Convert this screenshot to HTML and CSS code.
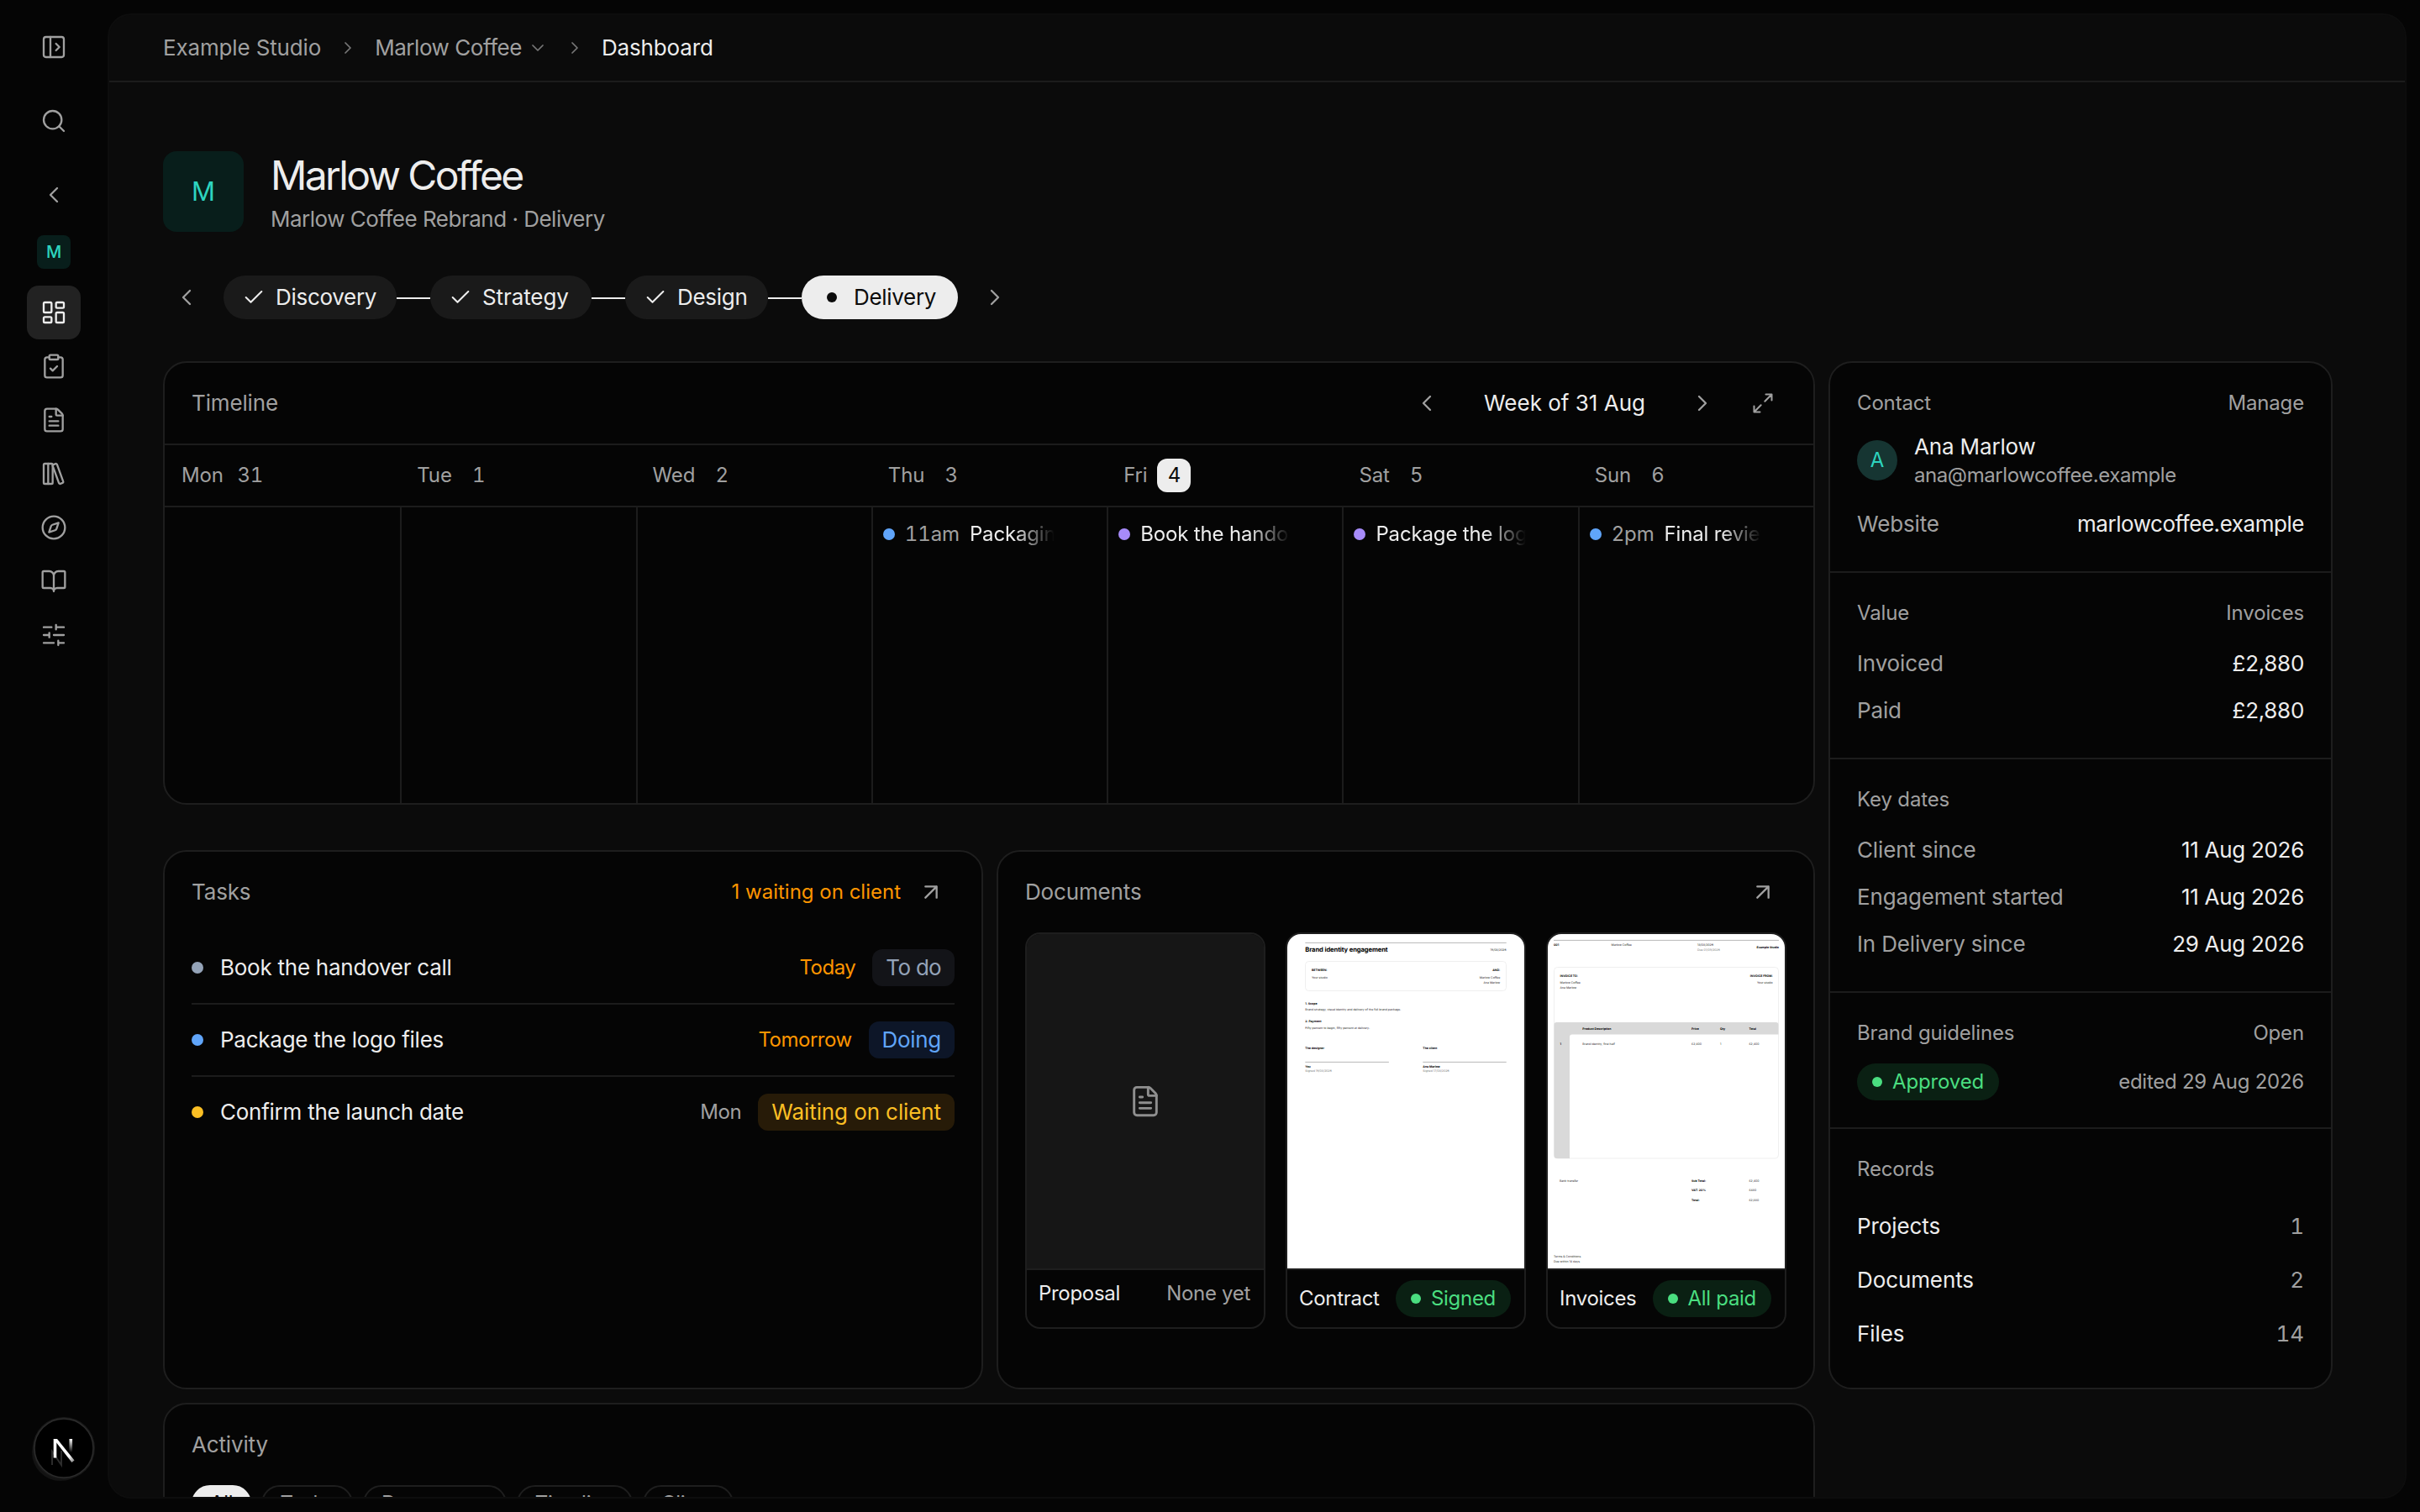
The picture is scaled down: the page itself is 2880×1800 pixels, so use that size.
FILE: index.html
```
<!DOCTYPE html>
<html lang="en">
<head>
    <meta charset="UTF-8">
    <meta name="viewport" content="width=device-width, initial-scale=1.0">
    <title>Marlow Coffee - Dashboard</title>
    <link rel="stylesheet" href="styles.css">
</head>
<body>
    <svg class="sprite">
        <symbol id="i-panel" viewBox="0 0 24 24"><rect x="3" y="3" width="18" height="18" rx="2"/><path d="M9 3v18M14 9l3 3-3 3"/></symbol>
        <symbol id="i-search" viewBox="0 0 24 24"><circle cx="11" cy="11" r="8"/><path d="m21 21-4.34-4.34"/></symbol>
        <symbol id="i-left" viewBox="0 0 24 24"><path d="m15 18-6-6 6-6"/></symbol>
        <symbol id="i-right" viewBox="0 0 24 24"><path d="m9 18 6-6-6-6"/></symbol>
        <symbol id="i-down" viewBox="0 0 24 24"><path d="m6 9 6 6 6-6"/></symbol>
        <symbol id="i-check" viewBox="0 0 24 24"><path d="M20 6 9 17l-5-5"/></symbol>
        <symbol id="i-grid" viewBox="0 0 24 24"><rect x="3" y="3" width="7" height="9" rx="1"/><rect x="14" y="3" width="7" height="5" rx="1"/><rect x="14" y="12" width="7" height="9" rx="1"/><rect x="3" y="16" width="7" height="5" rx="1"/></symbol>
        <symbol id="i-clipboard" viewBox="0 0 24 24"><rect x="8" y="2" width="8" height="4" rx="1"/><path d="M16 4h2a2 2 0 0 1 2 2v14a2 2 0 0 1-2 2H6a2 2 0 0 1-2-2V6a2 2 0 0 1 2-2h2"/><path d="m9 14 2 2 4-4"/></symbol>
        <symbol id="i-file" viewBox="0 0 24 24"><path d="M6 22a2 2 0 0 1-2-2V4a2 2 0 0 1 2-2h8a2.4 2.4 0 0 1 1.704.706l3.588 3.588A2.4 2.4 0 0 1 20 8v12a2 2 0 0 1-2 2z"/><path d="M14 2v5a1 1 0 0 0 1 1h5M10 9H8M16 13H8M16 17H8"/></symbol>
        <symbol id="i-library" viewBox="0 0 24 24"><rect x="3" y="3" width="8" height="18" rx="1"/><path d="M7 3v18"/><path d="M20.4 18.9c.2.5-.1 1.1-.6 1.3l-1.9.7c-.5.2-1.1-.1-1.3-.6L11.1 5.1c-.2-.5.1-1.1.6-1.3l1.9-.7c.5-.2 1.1.1 1.3.6Z"/></symbol>
        <symbol id="i-compass" viewBox="0 0 24 24"><circle cx="12" cy="12" r="10"/><path d="m16.24 7.76-1.804 5.411a2 2 0 0 1-1.265 1.265L7.76 16.24l1.804-5.411a2 2 0 0 1 1.265-1.265z"/></symbol>
        <symbol id="i-book" viewBox="0 0 24 24"><path d="M12 7v14M3 18a1 1 0 0 1-1-1V4a1 1 0 0 1 1-1h5a4 4 0 0 1 4 4 4 4 0 0 1 4-4h5a1 1 0 0 1 1 1v13a1 1 0 0 1-1 1h-6a3 3 0 0 0-3 3 3 3 0 0 0-3-3z"/></symbol>
        <symbol id="i-sliders" viewBox="0 0 24 24"><path d="M10 5H3M12 19H3M14 3v4M16 17v4M21 12h-9M21 19h-5M21 5h-7M8 10v4M8 12H3"/></symbol>
        <symbol id="i-expand" viewBox="0 0 24 24"><path d="M15 3h6v6M21 3l-7 7M3 21l7-7M9 21H3v-6"/></symbol>
        <symbol id="i-arrow" viewBox="0 0 24 24"><path d="M7 7h10v10M7 17 17 7"/></symbol>
    </svg>

    <div class="app">
        <nav class="sidebar">
            <a class="side-btn"><svg class="icon"><use href="#i-panel"/></svg></a>
            <a class="side-btn"><svg class="icon"><use href="#i-search"/></svg></a>
            <a class="side-btn"><svg class="icon"><use href="#i-left"/></svg></a>
            <div class="side-client">M</div>
            <div class="side-nav">
                <a class="side-btn active"><svg class="icon"><use href="#i-grid"/></svg></a>
                <a class="side-btn"><svg class="icon"><use href="#i-clipboard"/></svg></a>
                <a class="side-btn"><svg class="icon"><use href="#i-file"/></svg></a>
                <a class="side-btn"><svg class="icon"><use href="#i-library"/></svg></a>
                <a class="side-btn"><svg class="icon"><use href="#i-compass"/></svg></a>
                <a class="side-btn"><svg class="icon"><use href="#i-book"/></svg></a>
                <a class="side-btn"><svg class="icon"><use href="#i-sliders"/></svg></a>
            </div>
        </nav>

        <main class="panel">
            <header class="topbar">
                <span>Example Studio</span>
                <svg class="icon crumb-sep"><use href="#i-right"/></svg>
                <span class="crumb-menu"><span class="tight">Marlow Coffee</span><svg class="icon"><use href="#i-down"/></svg></span>
                <svg class="icon crumb-sep"><use href="#i-right"/></svg>
                <span class="current">Dashboard</span>
            </header>

            <div class="content">
                <div class="client">
                    <div class="client-logo">M</div>
                    <div class="client-text">
                        <h1>Marlow Coffee</h1>
                        <p>Marlow Coffee Rebrand · Delivery</p>
                    </div>
                </div>

                <div class="stages">
                    <button class="icon-btn"><svg class="icon"><use href="#i-left"/></svg></button>
                    <div class="track">
                        <span class="stage"><svg class="icon"><use href="#i-check"/></svg>Discovery</span>
                        <span class="stage"><svg class="icon"><use href="#i-check"/></svg>Strategy</span>
                        <span class="stage"><svg class="icon"><use href="#i-check"/></svg>Design</span>
                        <span class="stage now"><i class="stage-dot"></i>Delivery</span>
                    </div>
                    <button class="icon-btn"><svg class="icon"><use href="#i-right"/></svg></button>
                </div>

                <div class="board">
                    <div class="board-main">
                        <section class="card timeline">
                            <div class="card-head">
                                <h2>Timeline</h2>
                                <div class="week">
                                    <button class="icon-btn"><svg class="icon"><use href="#i-left"/></svg></button>
                                    <span class="week-label">Week of 31 Aug</span>
                                    <button class="icon-btn"><svg class="icon"><use href="#i-right"/></svg></button>
                                    <button class="icon-btn expand"><svg class="icon"><use href="#i-expand"/></svg></button>
                                </div>
                            </div>
                            <div class="days">
                                <div class="day">Mon <b>31</b></div>
                                <div class="day">Tue <b>1</b></div>
                                <div class="day">Wed <b>2</b></div>
                                <div class="day">Thu <b>3</b></div>
                                <div class="day today">Fri <b>4</b></div>
                                <div class="day">Sat <b>5</b></div>
                                <div class="day">Sun <b>6</b></div>
                            </div>
                            <div class="cells">
                                <div class="cell"></div>
                                <div class="cell"></div>
                                <div class="cell"></div>
                                <div class="cell"><div class="event"><i class="dot blue"></i><time>11am</time><span>Packaging review</span></div></div>
                                <div class="cell"><div class="event"><i class="dot purple"></i><span>Book the handover call</span></div></div>
                                <div class="cell"><div class="event"><i class="dot purple"></i><span>Package the logo files</span></div></div>
                                <div class="cell"><div class="event"><i class="dot blue"></i><time>2pm</time><span>Final review call</span></div></div>
                            </div>
                        </section>

                        <div class="pair">
                            <section class="card tasks">
                                <div class="card-head">
                                    <h2>Tasks</h2>
                                    <div class="head-right">
                                        <span class="warn">1 waiting on client</span>
                                        <button class="icon-btn"><svg class="icon"><use href="#i-arrow"/></svg></button>
                                    </div>
                                </div>
                                <ul class="task-list">
                                    <li><i class="dot slate"></i><span class="task-name">Book the handover call</span><span class="due soon">Today</span><span class="tag todo">To do</span></li>
                                    <li><i class="dot blue"></i><span class="task-name">Package the logo files</span><span class="due soon">Tomorrow</span><span class="tag doing">Doing</span></li>
                                    <li><i class="dot amber"></i><span class="task-name">Confirm the launch date</span><span class="due">Mon</span><span class="tag waiting">Waiting on client</span></li>
                                </ul>
                            </section>

                            <section class="card">
                                <div class="card-head">
                                    <h2>Documents</h2>
                                    <button class="icon-btn"><svg class="icon"><use href="#i-arrow"/></svg></button>
                                </div>
                                <div class="docs">
                                    <div class="doc">
                                        <div class="thumb empty"><svg class="icon"><use href="#i-file"/></svg></div>
                                        <div class="doc-foot"><span>Proposal</span><span class="muted">None yet</span></div>
                                    </div>
                                    <div class="doc">
                                        <div class="thumb">
                                            <svg class="sheet" viewBox="0 0 282 398">
                                                <path class="rule" d="M21.3 10.4h239.4M21.3 152.4h99.6M161.3 152.4h99.4"/>
                                                <rect class="frame" x="21.5" y="32.5" width="239" height="35" rx="4"/>
                                                <text class="title" x="21.3" y="21.2">Brand identity engagement</text>
                                                <text class="end" x="260.7" y="19.9">15/08/2026</text>
                                                <text class="strong" x="29" y="43.9">BETWEEN:</text>
                                                <text x="29" y="52.9">Your studio</text>
                                                <text class="strong end" x="253.2" y="43.9">AND:</text>
                                                <text class="end" x="253.2" y="52.9">Marlow Coffee</text>
                                                <text class="end" x="253.2" y="58.9">Ana Marlow</text>
                                                <text class="strong" x="21.3" y="83.9">1. Scope</text>
                                                <text x="21.3" y="90.9">Brand strategy, visual identity and delivery of the full brand package.</text>
                                                <text class="strong" x="21.3" y="105">2. Payment</text>
                                                <text x="21.3" y="112.9">Fifty percent to begin, fifty percent at delivery.</text>
                                                <text class="strong" x="21.3" y="136.9">The designer</text>
                                                <text class="strong" x="161.3" y="136.9">The client</text>
                                                <text class="strong" x="21.3" y="158.9">You</text>
                                                <text class="strong" x="161.3" y="158.9">Ana Marlow</text>
                                                <text class="pale" x="21.3" y="164">Signed 15/08/2026</text>
                                                <text class="pale" x="161.3" y="164">Signed 17/08/2026</text>
                                            </svg>
                                        </div>
                                        <div class="doc-foot"><span>Contract</span><span class="pill"><i></i>Signed</span></div>
                                    </div>
                                    <div class="doc">
                                        <div class="thumb">
                                            <svg class="sheet" viewBox="0 0 282 398">
                                                <path class="rule" d="M7 7.4h268"/>
                                                <text class="strong" x="7" y="13.9">001</text>
                                                <text x="75.5" y="13.9">Marlow Coffee</text>
                                                <text x="178" y="13.9">18/08/2026</text>
                                                <text class="pale" x="178" y="19.9">Due 01/09/2026</text>
                                                <text class="strong end" x="275" y="17.2">Example Studio</text>
                                                <rect class="frame" x="7.5" y="39.5" width="267" height="227.5" rx="4"/>
                                                <path class="band" d="M10.5 105h261a3 3 0 0 1 3 3v11.5H29a3 3 0 0 0-3 3V267H10.5a3 3 0 0 1-3-3V108a3 3 0 0 1 3-3z"/>
                                                <text class="strong" x="14.5" y="50.9">INVOICE TO:</text>
                                                <text x="14.5" y="58.9">Marlow Coffee</text>
                                                <text x="14.5" y="65">Ana Marlow</text>
                                                <text class="strong end" x="267.7" y="50.9">INVOICE FROM:</text>
                                                <text class="end" x="267.7" y="58.9">Your studio</text>
                                                <text class="strong" x="41.3" y="113.9">Product Description</text>
                                                <text class="strong" x="171" y="113.9">Price</text>
                                                <text class="strong" x="205" y="113.9">Qty</text>
                                                <text class="strong" x="239.4" y="113.9">Total</text>
                                                <text class="strong" x="14.5" y="131.9">1</text>
                                                <text x="41.3" y="131.9">Brand identity, first half</text>
                                                <text x="171" y="131.9">£2,400</text>
                                                <text x="205" y="131.9">1</text>
                                                <text x="239.4" y="131.9">£2,400</text>
                                                <text x="14" y="294.9">Bank transfer</text>
                                                <text class="strong" x="171" y="294.9">Sub Total:</text>
                                                <text x="239.4" y="294.9">£2,400</text>
                                                <text class="strong" x="171" y="306">VAT: 20%</text>
                                                <text x="239.4" y="306">£480</text>
                                                <text class="strong" x="171" y="317.9">Total:</text>
                                                <text x="239.4" y="317.9">£2,880</text>
                                                <text x="7" y="384.9">Terms &amp; Conditions</text>
                                                <text x="7" y="390.9">Due within 14 days</text>
                                            </svg>
                                        </div>
                                        <div class="doc-foot"><span>Invoices</span><span class="pill"><i></i>All paid</span></div>
                                    </div>
                                </div>
                            </section>
                        </div>

                        <section class="card activity">
                            <div class="card-head"><h2>Activity</h2></div>
                            <div class="chips">
                                <span class="chip on">All</span>
                                <span class="chip">Tasks</span>
                                <span class="chip">Documents</span>
                                <span class="chip">Timeline</span>
                                <span class="chip">Client</span>
                            </div>
                        </section>
                    </div>

                    <aside class="card info">
                        <section>
                            <div class="info-head"><h3>Contact</h3><a>Manage</a></div>
                            <div class="person">
                                <div class="person-pic">A</div>
                                <div>
                                    <div class="person-name">Ana Marlow</div>
                                    <div class="person-mail">ana@marlowcoffee.example</div>
                                </div>
                            </div>
                            <div class="row"><span>Website</span><b class="tight">marlowcoffee.example</b></div>
                        </section>
                        <section>
                            <div class="info-head"><h3>Value</h3><a>Invoices</a></div>
                            <div class="row"><span>Invoiced</span><b>£2,880</b></div>
                            <div class="row"><span>Paid</span><b>£2,880</b></div>
                        </section>
                        <section>
                            <div class="info-head"><h3>Key dates</h3></div>
                            <div class="row"><span>Client since</span><b>11 Aug 2026</b></div>
                            <div class="row"><span>Engagement started</span><b>11 Aug 2026</b></div>
                            <div class="row"><span>In Delivery since</span><b>29 Aug 2026</b></div>
                        </section>
                        <section>
                            <div class="info-head"><h3>Brand guidelines</h3><a>Open</a></div>
                            <div class="row guide"><span class="pill"><i></i>Approved</span><small>edited 29 Aug 2026</small></div>
                        </section>
                        <section class="records">
                            <div class="info-head"><h3>Records</h3></div>
                            <div class="row"><b>Projects</b><span>1</span></div>
                            <div class="row"><b>Documents</b><span>2</span></div>
                            <div class="row"><b>Files</b><span>14</span></div>
                        </section>
                    </aside>
                </div>
            </div>
        </main>
    </div>

    <!-- dev tools badge, floats over the page -->
    <div class="dev-badge">
        <svg viewBox="0 0 80 80">
            <defs>
                <linearGradient id="fadeDiag" x1="48" y1="48" x2="60" y2="63" gradientUnits="userSpaceOnUse"><stop offset="0" stop-color="#fff"/><stop offset="1" stop-color="#fff" stop-opacity="0"/></linearGradient>
                <linearGradient id="fadeStem" x1="0" y1="29" x2="0" y2="45" gradientUnits="userSpaceOnUse"><stop offset="0" stop-color="#fff"/><stop offset="1" stop-color="#fff" stop-opacity="0"/></linearGradient>
            </defs>
            <circle cx="36" cy="45" r="34" fill="#131313"/>
            <circle cx="40" cy="40" r="37" fill="#1a1a1a"/>
            <circle cx="40" cy="40" r="35" fill="#000" stroke="#2b2b2b" stroke-width="1.5"/>
            <path d="M26 60V44l11 16V43" fill="none" stroke="#2c2c2c" stroke-width="2"/>
            <path d="M27.700 29h3.600v22.500h-3.600z" fill="#fff"/>
            <path d="M27.700 29h4.300l20.500 25.500-3 2.500z" fill="url(#fadeDiag)"/>
            <path d="M46.500 29h3.600v16h-3.600z" fill="url(#fadeStem)"/>
        </svg>
    </div>
</body>
</html>
```
FILE: styles.css
```
* {
    box-sizing: border-box;
}
body {
    margin: 0;
    background: #050505;
    color: #ededed;
    font-family: 'Inter', 'Liberation Sans', sans-serif;
    font-size: 26px;
    line-height: 36px;
    letter-spacing: -0.15px;
    overflow: hidden;
}
h1, h2, h3, p, ul {
    margin: 0;
    padding: 0;
    font-weight: 400;
}
b {
    font-weight: 400;
}
button {
    padding: 0;
    border: none;
    background: none;
    color: inherit;
}
.sprite {
    position: absolute;
    width: 0;
    height: 0;
}
.icon {
    display: block;
    flex: none;
    width: 32px;
    height: 32px;
    fill: none;
    stroke: currentColor;
    stroke-width: 1.75;
    stroke-linecap: round;
    stroke-linejoin: round;
}
.tight, .row .tight {
    letter-spacing: -0.45px;
}
.muted {
    color: #a0a0a0;
}

/* sidebar */
.app {
    display: flex;
    height: 1800px;
}
.sidebar {
    width: 128px;
    padding-top: 24px;
    display: flex;
    flex-direction: column;
    align-items: center;
    gap: 24px;
    color: #a0a0a0;
}
.side-btn {
    width: 64px;
    height: 64px;
    border-radius: 14px;
    display: flex;
    align-items: center;
    justify-content: center;
}
.side-btn.active {
    background: #222;
    color: #ededed;
}
.side-client {
    width: 40px;
    height: 40px;
    margin-top: -8px;
    border-radius: 8px;
    background: #081e1b;
    color: #2dd4bf;
    font-size: 20px;
    font-weight: 500;
    line-height: 40px;
    text-align: center;
}
.side-nav {
    margin-top: -4px;
}

/* main panel */
.panel {
    flex: 1;
    margin: 16px 16px 16px 0;
    border: 2px solid #0d0d0d;
    border-radius: 28px;
    background: #0b0b0b;
    overflow: hidden;
}
.topbar {
    height: 80px;
    padding: 0 64px;
    display: flex;
    align-items: center;
    gap: 20px;
    border-bottom: 2px solid #1c1c1c;
    color: #a0a0a0;
}
.topbar .icon {
    width: 24px;
    height: 24px;
    color: #777;
}
.crumb-menu {
    display: flex;
    align-items: center;
    gap: 7px;
}
.topbar .current {
    color: #ededed;
}
.content {
    padding: 82px 86px 0 64px;
}
.client {
    height: 96px;
    display: flex;
    gap: 32px;
}
.client-logo {
    width: 96px;
    height: 96px;
    border-radius: 16px;
    background: #081e1b;
    color: #2dd4bf;
    font-size: 31px;
    line-height: 96px;
    text-align: center;
}
.client-text h1 {
    margin-top: 1px;
    font-size: 48px;
    line-height: 56px;
    letter-spacing: -2.6px;
}
.client-text p {
    margin-top: 6px;
    color: #a0a0a0;
    letter-spacing: -0.5px;
}

/* stages */
.icon-btn {
    flex: none;
    width: 56px;
    height: 56px;
    display: flex;
    align-items: center;
    justify-content: center;
    color: #a0a0a0;
}
.stages {
    margin-top: 50px;
    display: flex;
    align-items: center;
    gap: 16px;
}
.track {
    display: flex;
}
.stage {
    position: relative;
    width: 206px;
    height: 52px;
    padding-left: 22px;
    display: flex;
    align-items: center;
    gap: 12px;
    border-radius: 26px;
    background: #1a1a1a;
    letter-spacing: -0.3px;
}
.stage:nth-child(2) {
    width: 192px;
    letter-spacing: -0.1px;
}
.stage:nth-child(3) {
    width: 170px;
}
.stage .icon {
    width: 28px;
    height: 28px;
}
.stage + .stage {
    margin-left: 40px;
}
.stage + .stage::before {
    content: "";
    position: absolute;
    left: -40px;
    top: 26px;
    width: 40px;
    height: 2px;
    background: #ededed;
}
.stage.now {
    width: 186px;
    background: #ededed;
    color: #0b0b0b;
}
.stage-dot {
    width: 12px;
    height: 12px;
    margin: 0 8px;
    border-radius: 50%;
    background: #0b0b0b;
}

/* cards */
.board {
    margin-top: 48px;
    display: grid;
    grid-template-columns: 1966px 600px;
    gap: 16px;
    align-items: start;
}
.card {
    border: 2px solid #1e1e1e;
    border-radius: 28px;
    background: #050505;
}
.card-head {
    height: 96px;
    padding: 0 32px;
    display: flex;
    align-items: center;
    justify-content: space-between;
}
.card-head h2 {
    font-size: 26px;
    color: #a0a0a0;
}
.head-right, .week {
    display: flex;
    align-items: center;
}

/* timeline */
.timeline {
    height: 528px;
    overflow: hidden;
}
.week-label {
    width: 272px;
    letter-spacing: 0;
    text-align: center;
}
.expand {
    margin-left: 16px;
}
.expand .icon {
    width: 28px;
    height: 28px;
}
.days, .cells {
    display: grid;
    grid-template-columns: repeat(7, 1fr);
}
.days {
    height: 76px;
    border-top: 2px solid #1c1c1c;
    border-bottom: 2px solid #1c1c1c;
}
.day {
    padding-left: 20px;
    display: flex;
    align-items: center;
    gap: 12px;
    font-size: 24px;
    color: #a0a0a0;
}
.day b {
    width: 40px;
    height: 40px;
    border-radius: 12px;
    line-height: 40px;
    text-align: center;
    font-variant-numeric: tabular-nums;
}
.today b {
    background: #ededed;
    color: #0b0b0b;
}
.cells {
    height: 352px;
}
.cell {
    min-width: 0;
    padding: 14px 62px 0 12px;
    border-left: 2px solid #1c1c1c;
}
.cell:first-child {
    border-left: none;
}
.event {
    display: flex;
    align-items: center;
    font-size: 24px;
    white-space: nowrap;
    overflow: hidden;
}
.event time {
    margin-right: 12px;
    color: #a0a0a0;
    font-variant-numeric: tabular-nums;
}
.event span {
    flex: 1;
    overflow: hidden;
    -webkit-mask-image: linear-gradient(to right, #000 calc(100% - 48px), transparent);
    mask-image: linear-gradient(to right, #000 calc(100% - 48px), transparent);
}
.dot {
    flex: none;
    width: 14px;
    height: 14px;
    border-radius: 50%;
}
.event .dot {
    margin-right: 12px;
}
.blue { background: #60a5fa; }
.purple { background: #a78bfa; }
.slate { background: #94a3b8; }
.amber { background: #fbbf24; }

/* tasks */
.pair {
    margin-top: 54px;
    display: grid;
    grid-template-columns: 976px 974px;
    gap: 16px;
}
.pair .card {
    height: 642px;
}
.warn {
    margin-right: 8px;
    font-size: 24px;
    color: #ff9500;
    letter-spacing: 0;
}
.task-list {
    padding: 0 32px;
    list-style: none;
}
.task-list li {
    height: 84px;
    display: flex;
    align-items: center;
}
.task-list li + li {
    height: 86px;
    border-top: 2px solid #1c1c1c;
}
.task-name {
    flex: 1;
    margin-left: 20px;
    letter-spacing: -0.25px;
}
.due {
    margin-right: 20px;
    font-size: 24px;
    color: #a0a0a0;
    letter-spacing: -0.4px;
}
.due.soon {
    color: #ff9500;
    letter-spacing: -0.5px;
}
.tag {
    height: 44px;
    padding: 0 16px;
    border-radius: 12px;
    line-height: 44px;
    letter-spacing: -0.3px;
}
.todo {
    background: #131418;
    color: #94a3b8;
    letter-spacing: -0.7px;
}
.doing {
    background: #0d1628;
    color: #60a5fa;
}
.waiting {
    background: #271b08;
    color: #fbbf24;
    letter-spacing: -0.1px;
}

/* documents */
.docs {
    padding: 0 32px;
    display: grid;
    grid-template-columns: repeat(3, 286px);
    gap: 24px;
}
.doc {
    height: 472px;
    border: 2px solid #1e1e1e;
    border-radius: 18px;
    overflow: hidden;
}
.thumb {
    height: 400px;
    border-bottom: 2px solid #1e1e1e;
    background: #fff;
}
.thumb.empty {
    display: flex;
    align-items: center;
    justify-content: center;
    background: #161616;
    color: #8f8f8f;
}
.thumb.empty .icon {
    width: 40px;
    height: 40px;
}
.sheet {
    display: block;
    width: 282px;
    height: 398px;
    font-size: 3.5px;
    letter-spacing: 0;
    fill: #222;
    text-rendering: geometricPrecision;
}
.sheet .title {
    font-size: 7.6px;
    font-weight: 700;
    letter-spacing: -0.1px;
    fill: #000;
}
.sheet .strong {
    font-weight: 700;
    fill: #000;
}
.sheet .end {
    text-anchor: end;
}
.sheet .pale {
    fill: #777;
}
.sheet .rule {
    stroke: #999;
    stroke-width: 0.7;
}
.sheet .frame {
    fill: none;
    stroke: #e8e8e8;
    stroke-width: 0.7;
}
.sheet .band {
    fill: #d9d9d9;
}
.doc-foot {
    padding: 12px 16px 0 14px;
    display: flex;
    justify-content: space-between;
    font-size: 24px;
    line-height: 32px;
    letter-spacing: -0.3px;
}
.doc-foot span {
    white-space: nowrap;
}
.pill {
    height: 44px;
    padding: 0 18px;
    display: flex;
    align-items: center;
    gap: 12px;
    border-radius: 22px;
    background: #0a2013;
    color: #4ade80;
    font-size: 24px;
}
.pill i {
    width: 12px;
    height: 12px;
    border-radius: 50%;
    background: #4ade80;
}
.doc:nth-child(n+2) .doc-foot {
    align-items: center;
}

/* activity */
.activity {
    height: 420px;
    margin-top: 16px;
}
.chips {
    padding: 0 32px;
    display: flex;
    gap: 12px;
}
.chip {
    height: 44px;
    padding: 0 20px;
    border: 2px solid #1e1e1e;
    border-radius: 22px;
    font-size: 24px;
    line-height: 40px;
    letter-spacing: -0.25px;
    color: #a0a0a0;
}
.chip.on {
    border-color: #ededed;
    background: #ededed;
    color: #0b0b0b;
}

/* right column */
.info section {
    padding: 32px 32px 28px;
}
.info section + section {
    border-top: 2px solid #1c1c1c;
}
.info-head {
    margin-bottom: 16px;
    display: flex;
    justify-content: space-between;
    font-size: 24px;
    line-height: 32px;
    color: #a0a0a0;
}
.info-head h3 {
    font-size: 24px;
}
.row {
    height: 56px;
    display: flex;
    align-items: center;
    justify-content: space-between;
    color: #a0a0a0;
}
.row b {
    color: #ededed;
    letter-spacing: -0.3px;
}
.row small {
    font-size: 24px;
    letter-spacing: -0.25px;
}
.row.guide {
    height: 52px;
}
.person {
    margin: 18px 0 14px;
    display: flex;
    align-items: center;
    gap: 20px;
}
.person-pic {
    width: 48px;
    height: 48px;
    border-radius: 50%;
    background: #163532;
    color: #2dd4bf;
    font-size: 24px;
    line-height: 48px;
    text-align: center;
}
.person-mail {
    font-size: 24px;
    line-height: 32px;
    letter-spacing: -0.42px;
    color: #a0a0a0;
}
.info .records {
    padding-bottom: 32px;
}
.records .info-head {
    margin-bottom: 20px;
}
.records .row {
    height: 64px;
    font-variant-numeric: tabular-nums;
}
.records .row b {
    letter-spacing: -0.1px;
}

.dev-badge {
    position: fixed;
    left: 36px;
    top: 1684px;
    width: 80px;
    height: 80px;
}
```
